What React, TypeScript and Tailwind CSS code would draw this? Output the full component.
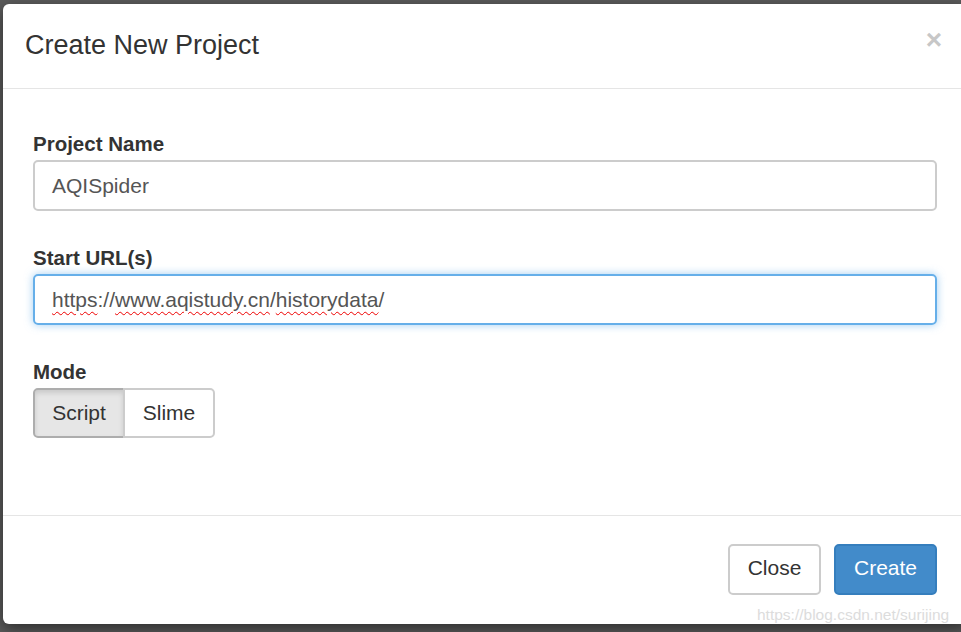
import React from "react";

const font = { fontFamily: '"Liberation Sans", Arial, sans-serif' };

function Field({ label, children }: { label: string; children: React.ReactNode }) {
  return (
    <div className="flex flex-col">
      <label className="mb-[2px] block text-[20.5px] font-bold leading-[29px] text-[#333]">
        {label}
      </label>
      {children}
    </div>
  );
}

function Typo({ children }: { children: React.ReactNode }) {
  return (
    <span className="underline decoration-[#e00] decoration-wavy decoration-1 underline-offset-[4px]">
      {children}
    </span>
  );
}

export default function App() {
  return (
    <div
      className="relative h-[632px] w-[961px] overflow-hidden bg-[#5b5b5b] pl-[3px] pt-[4px]"
      style={font}
    >
      <div className="flex h-[620px] w-[964px] flex-col rounded-[6px] bg-white shadow-[0_5px_15px_rgba(0,0,0,0.5)]">
        <div className="flex h-[85px] items-center justify-between border-b border-[#e5e5e5] pl-[22px] pr-[25px]">
          <h4 className="pb-[2px] text-[27px] leading-none text-[#333]">Create New Project</h4>
          <span className="mb-[12px] text-[28px] font-bold leading-none text-[#c7c7c7]">×</span>
        </div>

        <div className="flex flex-1 flex-col gap-[32px] px-[30px] pt-[40px]">
          <Field label="Project Name">
            <div className="flex h-[51px] items-center rounded-[5px] border-2 border-[#ccc] px-[17px] text-[21px] text-[#555]">
              AQISpider
            </div>
          </Field>
          <Field label="Start URL(s)">
            <div className="flex h-[51px] items-center rounded-[5px] border-2 border-[#66afe9] px-[17px] text-[21px] text-[#555] shadow-[0_0_8px_rgba(102,175,233,0.6)]">
              <span>
                <Typo>https</Typo>://<Typo>www.aqistudy.cn</Typo>/<Typo>historydata</Typo>/
              </span>
            </div>
          </Field>
          <Field label="Mode">
            <div className="flex">
              <button className="h-[50px] w-[92px] rounded-l-[5px] border-2 border-[#adadad] bg-[#e6e6e6] text-[21px] text-[#333] shadow-[inset_0_3px_5px_rgba(0,0,0,0.125)]">
                Script
              </button>
              <button className="-ml-[2px] h-[50px] w-[92px] rounded-r-[5px] border-2 border-[#ccc] bg-white text-[21px] text-[#333]">
                Slime
              </button>
            </div>
          </Field>
        </div>

        <div className="flex h-[109px] justify-end gap-[13px] border-t border-[#e5e5e5] pr-[30px] pt-[28px]">
          <button className="h-[51px] w-[93px] rounded-[5px] border-2 border-[#ccc] bg-white pb-[3px] text-[21px] text-[#333]">
            Close
          </button>
          <button className="h-[51px] w-[103px] rounded-[5px] border-2 border-[#357ebd] bg-[#428bca] pb-[3px] text-[21px] text-white">
            Create
          </button>
        </div>
      </div>

      <span className="absolute left-[757px] top-[603px] whitespace-nowrap text-[15.5px] text-[#dcdcdc]">
        https://blog.csdn.net/surijing
      </span>
    </div>
  );
}
